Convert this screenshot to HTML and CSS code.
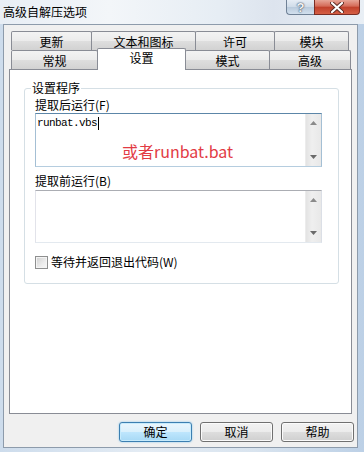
FILE: index.html
```html
<!DOCTYPE html>
<html lang="zh-CN">
<head>
  <meta charset="UTF-8" />
  <title>高级自解压选项</title>
  <link rel="stylesheet" href="styles.css">
</head>
<body>

  <div class="window">
    <div class="titlebar">
      <span class="title">高级自解压选项</span>
      <div class="caption">
        <span class="cap-btn cap-help">?</span>
        <span class="cap-btn cap-close">
          <svg width="14" height="11" viewBox="0 0 14 11">
            <path d="M2 1 L12 10 M12 1 L2 10" stroke="#5a2a22" stroke-width="4" stroke-linecap="round" />
            <path d="M2 1 L12 10 M12 1 L2 10" stroke="#fff" stroke-width="2.2" stroke-linecap="round" />
          </svg>
        </span>
      </div>
    </div>

    <div class="frame">
      <div class="client">

        <div class="tabs">
          <div class="tab-row">
            <div class="tab w80">更新</div>
            <div class="tab w104">文本和图标</div>
            <div class="tab w79">许可</div>
            <div class="tab w74">模块</div>
          </div>
          <div class="tab-row">
            <div class="tab w86">常规</div>
            <div class="tab w88 active">设置</div>
            <div class="tab w84">模式</div>
            <div class="tab w81">高级</div>
          </div>
        </div>

        <div class="panel">
          <div class="group">
            <div class="group-title">设置程序</div>

            <div class="field-label first">提取后运行(F)</div>
            <div class="edit focused tall">
              <div class="edit-text">
                <div class="mono">runbat.vbs<span class="caret"></span></div>
                <div class="note">或者runbat.bat</div>
              </div>
              <div class="vscroll">
                <svg width="7" height="4" viewBox="0 0 7 4"><path d="M0 4 L3.5 0 L7 4 Z" fill="#8a8a8a" /></svg>
                <svg width="7" height="4" viewBox="0 0 7 4"><path d="M0 0 L3.5 4 L7 0 Z" fill="#6a6a6a" /></svg>
              </div>
            </div>

            <div class="field-label">提取前运行(B)</div>
            <div class="edit second">
              <div class="edit-text"></div>
              <div class="vscroll">
                <svg width="7" height="4" viewBox="0 0 7 4"><path d="M0 4 L3.5 0 L7 4 Z" fill="#8a8a8a" /></svg>
                <svg width="7" height="4" viewBox="0 0 7 4"><path d="M0 0 L3.5 4 L7 0 Z" fill="#6a6a6a" /></svg>
              </div>
            </div>

            <div class="check-row">
              <span class="checkbox"></span>
              <span>等待并返回退出代码(W)</span>
            </div>
          </div>
        </div>

        <div class="buttons">
          <button class="btn default">确定</button>
          <button class="btn">取消</button>
          <button class="btn">帮助</button>
        </div>

      </div>
    </div>
  </div>

</body>
</html>
```

FILE: styles.css
```css
* {
  box-sizing: border-box;
}

body {
  margin: 0;
  width: 364px;
  height: 452px;
  overflow: hidden;
  font-family: "Noto Sans CJK SC", "Liberation Sans", sans-serif;
  font-size: 12px;
  color: #000;
  background: #c9d9ea;
}

.window {
  width: 364px;
  height: 452px;
  display: flex;
  flex-direction: column;
  background: linear-gradient(to right, #cddcec, #e4ecf4 40%, #d9e4ef 70%, #bcd0e6);
}

/* title bar */
.titlebar {
  height: 24px;
  display: flex;
  align-items: flex-start;
  background: linear-gradient(to right, #e8eef5, #f3f6f9 30%, #e6edf4 60%, #dde4ee 75%, #e9eff5);
}

.title {
  padding-left: 3px;
  line-height: 24px;
  font-size: 12px;
}

.caption {
  margin-left: auto;
  margin-right: 4px;
  display: flex;
}

.cap-btn {
  height: 15px;
  display: flex;
  align-items: center;
  justify-content: center;
}

.cap-help {
  width: 28px;
  border: 1px solid #6f8196;
  border-top: none;
  border-right: none;
  border-radius: 0 0 0 4px;
  background: linear-gradient(#e6edf5, #cfdbe8 50%, #b9cadc 51%, #d2e0ee);
  color: #f4f4f4;
  font-family: "Liberation Sans", sans-serif;
  font-weight: bold;
  font-size: 13px;
  text-shadow: 0 0 2px #33475e, 0 0 1px #33475e;
}

.cap-close {
  width: 46px;
  border: 1px solid #7a2d24;
  border-top: none;
  border-radius: 0 0 4px 0;
  background: linear-gradient(#e7a597, #d46a57 45%, #c0402b 50%, #d55f45);
}

/* window frame + client area */
.frame {
  flex: 1;
  padding: 0 6px 4px 3px;
  display: flex;
}

.client {
  flex: 1;
  border: 1px solid #8d9bab;
  background: #f0f0f0;
  padding: 6px 5px 0 6px;
}

/* tabs */
.tabs {
  margin-left: 1px;
}

.tab-row {
  display: flex;
  height: 19px;
}

.tab {
  height: 19px;
  margin-right: -1px;
  border: 1px solid #898c95;
  border-bottom: none;
  border-radius: 2px 2px 0 0;
  background: linear-gradient(#f3f3f3, #ebebeb 50%, #dedede 51%, #d2d2d2);
  text-align: center;
  line-height: 17px;
  padding-top: 1px;
}

.tab.active {
  position: relative;
  z-index: 1;
  height: 22px;
  margin-top: -2px;
  background: #fff;
  padding-top: 0;
}

.w74 { width: 75px; }
.w79 { width: 80px; }
.w80 { width: 81px; }
.w81 { width: 82px; }
.w84 { width: 85px; }
.w86 { width: 87px; }
.w88 { width: 89px; }
.w104 { width: 105px; }

.panel {
  margin-left: -1px;
  height: 345px;
  border: 1px solid #898c95;
  background: #fff;
  padding-left: 14px;
}

/* group box */
.group {
  width: 315px;
  margin-top: 18px;
  border: 1px solid #d5dfe5;
  border-radius: 3px;
  padding: 0 16px 14px 10px;
}

.group-title {
  width: fit-content;
  margin: -8px 0 0 -4px;
  padding: 0 1px;
  background: #fff;
  line-height: 14px;
}

.field-label {
  line-height: 14px;
  margin-top: 7px;
}

.field-label.first {
  margin-top: 3px;
}

.edit {
  display: flex;
  margin-top: 2px;
  height: 53px;
  border: 1px solid #abadb3;
  border-color: #abadb3 #dbdfe6 #e3e9ef #e2e3ea;
}

.edit.tall {
  margin-top: 1px;
  height: 54px;
}

.edit.focused {
  border-color: #5c86a8 #a4bfd4 #b5cddf #a4bfd4;
}

.edit-text {
  flex: 1;
  padding: 3px 1px;
}

.mono {
  font-family: "Liberation Mono", monospace;
  font-size: 11px;
  letter-spacing: -0.6px;
  line-height: 13px;
  display: flex;
  align-items: center;
}

.caret {
  display: inline-block;
  width: 1px;
  height: 13px;
  margin-left: 1px;
  background: #000;
}

.note {
  margin: 11px 0 0 85px;
  color: #e23b44;
  font-size: 16px;
  line-height: 20px;
}

.vscroll {
  width: 16px;
  margin: 0;
  background: linear-gradient(to right, #e3e3e3, #efefef 40%, #e8e8e8);
  border-left: 1px solid #ececec;
  display: flex;
  flex-direction: column;
  justify-content: space-between;
  align-items: center;
  padding: 7px 0 7px;
}

.check-row {
  display: flex;
  align-items: center;
  gap: 3px;
  margin-top: 12px;
  line-height: 14px;
}

.checkbox {
  width: 13px;
  height: 13px;
  border: 1px solid #8e8f8f;
  background: linear-gradient(135deg, #cfcfcf, #ececec 60%, #f8f8f8);
  box-shadow: inset 0 0 0 1px #f4f4f4;
}

/* dialog buttons */
.buttons {
  display: flex;
  justify-content: flex-end;
  gap: 8px;
  margin-top: 8px;
  margin-right: -2px;
}

.btn {
  width: 73px;
  height: 20px;
  padding: 0;
  font-family: "Noto Sans CJK SC", "Liberation Sans", sans-serif;
  font-size: 12px;
  line-height: 18px;
  color: #000;
  border: 1px solid #707070;
  border-radius: 3px;
  background: linear-gradient(#f2f2f2, #ebebeb 50%, #dddddd 51%, #cfcfcf);
  box-shadow: inset 0 0 0 1px #fbfbfb;
}

.btn.default {
  border-color: #3c7fb1;
  background: linear-gradient(#eaf6fd, #d9f0fc 50%, #bee6fd 51%, #a7d9f5);
  box-shadow: inset 0 0 0 1px #c7ebfc, 0 0 2px #7bc2ea;
}
```
